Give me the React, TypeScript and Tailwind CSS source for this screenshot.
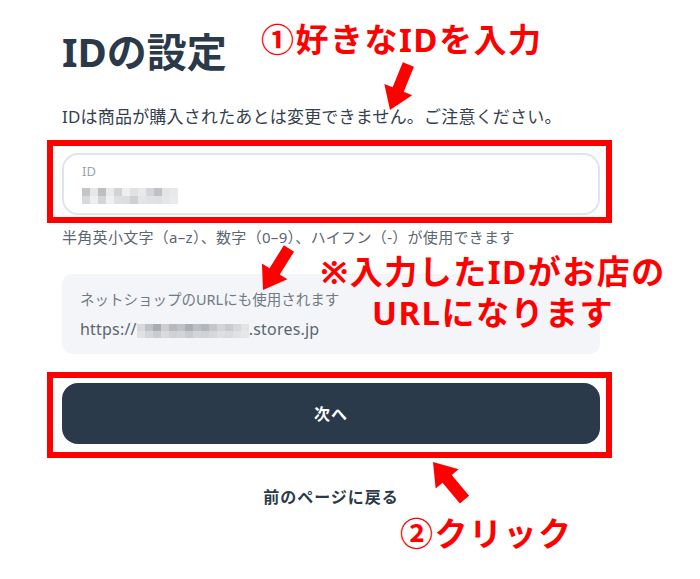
const font = "font-['Noto_Sans','Noto_Sans_CJK_JP',sans-serif]"

// pixelated "mosaic" used to hide the entered ID
function Mosaic({ rows, cell }: { rows: string[][]; cell: string }) {
  return (
    <div className="flex flex-col blur-[0.6px]">
      {rows.map((row, i) => (
        <div key={i} className="flex">
          {row.map((c, j) => (
            <div key={j} className={cell} style={{ backgroundColor: c }} />
          ))}
        </div>
      ))}
    </div>
  )
}

const idRows = [
  ['#c4c5c9', '#e6e7e9', '#bdbec2', '#e9eaec', '#d2d3d6', '#eeeff0', '#e1e2e4', '#e9e9eb', '#d4d5d8', '#c0c1c5', '#e3e4e6', '#e8e9eb'],
  ['#d8d9dc', '#eeeff1', '#d4d5d8', '#eff0f1', '#dfe0e2', '#dddee1', '#ced0d3', '#e4e5e7', '#e1e2e4', '#dfe0e2', '#e6e7e9', '#eaebed'],
]

const urlRows = [
  ['#d7d9dc', '#bfc2c6', '#a9adb2', '#ccced2', '#b6b9be', '#bfc2c6', '#abafb4', '#bcbfc3', '#b3b6bb', '#c3c6ca', '#d2d4d7', '#c8cacd', '#d6d8db', '#e3e4e6'],
  ['#dfe1e3', '#d4d6d9', '#cacdd0', '#d8dadd', '#cfd1d4', '#d2d4d7', '#c9cbcf', '#d3d5d8', '#d0d2d5', '#d6d8db', '#dddfe1', '#d9dbde', '#e0e1e3', '#e6e7e9'],
]

function Arrow({ x, y, deg }: { x: number; y: number; deg: number }) {
  // arrow pointing down with its tip at the origin, rotated into place
  return (
    <polygon
      points="-6,-49 6,-49 6,-22 15,-22 0,0 -15,-22 -6,-22"
      fill="#ff0000"
      transform={`translate(${x} ${y}) rotate(${deg})`}
    />
  )
}

export default function App() {
  return (
    <div className={`relative w-[700px] h-[579px] overflow-hidden bg-white ${font}`}>
      <div className="w-[600px] pl-[62px] pt-[28px]">
        <h1 className="text-[40px] leading-[48px] font-bold text-[#2b3a4a]">IDの設定</h1>
        <p className="mt-[29px] text-[17px] leading-[24px] tracking-[0.2px] text-[#34404c]">
          IDは商品が購入されたあとは変更できません。ご注意ください。
        </p>

        <div className="mt-[24px] h-[62px] rounded-[16px] border-2 border-[#dfe5ec] bg-white pl-[18px] pt-[8px]">
          <div className="text-[13px] leading-[16px] text-[#9aa3ad]">ID</div>
          <div className="mt-[9px]">
            <Mosaic rows={idRows} cell="w-[8px] h-[8px]" />
          </div>
        </div>

        <p className="mt-[12px] text-[15px] leading-[20px] tracking-[0.3px] text-[#5a6671]">
          半角英小文字（a–z）、数字（0–9）、ハイフン（-）が使用できます
        </p>

        <div className="mt-[27px] h-[80px] rounded-[10px] bg-[#f3f5f8] pl-[18px] pt-[15px]">
          <div className="text-[14.5px] leading-[20px] text-[#6f7a85]">ネットショップのURLにも使用されます</div>
          <div className="mt-[8px] flex items-center text-[16px] leading-[24px] tracking-[0.2px] text-[#5b6671]">
            <span>https://</span>
            <div className="mt-[4px]">
              <Mosaic rows={urlRows} cell="w-[8px] h-[7px]" />
            </div>
            <span>.stores.jp</span>
          </div>
        </div>

        <button className="mt-[29px] flex h-[61px] w-full items-center justify-center rounded-[16px] bg-[#2b3a4a] text-[16px] font-bold tracking-[1px] text-white">
          次へ
        </button>

        <div className="mt-[41px] text-center text-[16px] leading-[24px] font-bold tracking-[1px] text-[#2b3a4a]">
          前のページに戻る
        </div>
      </div>

      {/* annotations */}
      <div className="absolute left-[47px] top-[140px] h-[83px] w-[565px] border-[6px] border-[#ff0000]" />
      <div className="absolute left-[47px] top-[372px] h-[86px] w-[565px] border-[6px] border-[#ff0000]" />

      <div className="absolute left-[261px] top-[23px] whitespace-nowrap text-[33px] leading-none font-bold tracking-[1.5px] text-[#ff0000]">
        ①好きなIDを入力
      </div>
      <div className="absolute left-[316px] top-[251px] w-[354px] text-center text-[33px] leading-[41px] font-bold tracking-[1.5px] text-[#ff0000]">
        ※入力したIDがお店の
        <br />
        URLになります
      </div>
      <div className="absolute left-[400px] top-[517px] whitespace-nowrap text-[33px] leading-none font-bold tracking-[1.5px] text-[#ff0000]">
        ②クリック
      </div>

      <svg className="pointer-events-none absolute left-0 top-0" width="700" height="579">
        <Arrow x={390} y={110} deg={22} />
        <Arrow x={263} y={290} deg={32} />
        <Arrow x={433} y={462} deg={140} />
      </svg>
    </div>
  )
}
